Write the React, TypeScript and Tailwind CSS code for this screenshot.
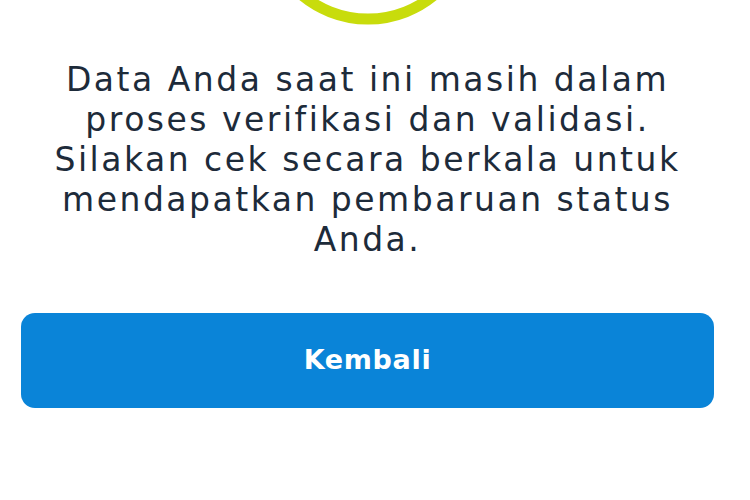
export default function App() {
  return (
    <div className="h-[500px] w-[750px] overflow-hidden bg-white pl-[21px] pr-[36px] font-['DejaVu_Sans',sans-serif]">
      {/* status icon, cut at the top */}
      <div className="flex justify-center">
        <svg width="220" height="26" viewBox="0 0 220 26" className="block">
          <circle cx="110" cy="-84" r="103" fill="none" stroke="#c8dc0c" strokeWidth="11" />
        </svg>
      </div>

      <p className="mt-[34px] text-center text-[33px] leading-[40px] tracking-[2.5px] text-[#1d2b3a]">
        <span className="block">Data Anda saat ini masih dalam</span>
        <span className="block">proses verifikasi dan validasi.</span>
        <span className="block">Silakan cek secara berkala untuk</span>
        <span className="block">mendapatkan pembaruan status</span>
        <span className="block">Anda.</span>
      </p>

      <button className="mt-[53px] flex h-[95px] w-full items-center justify-center rounded-[14px] bg-[#0a84d8] text-[27px] font-bold tracking-wide text-white">
        Kembali
      </button>
    </div>
  );
}
